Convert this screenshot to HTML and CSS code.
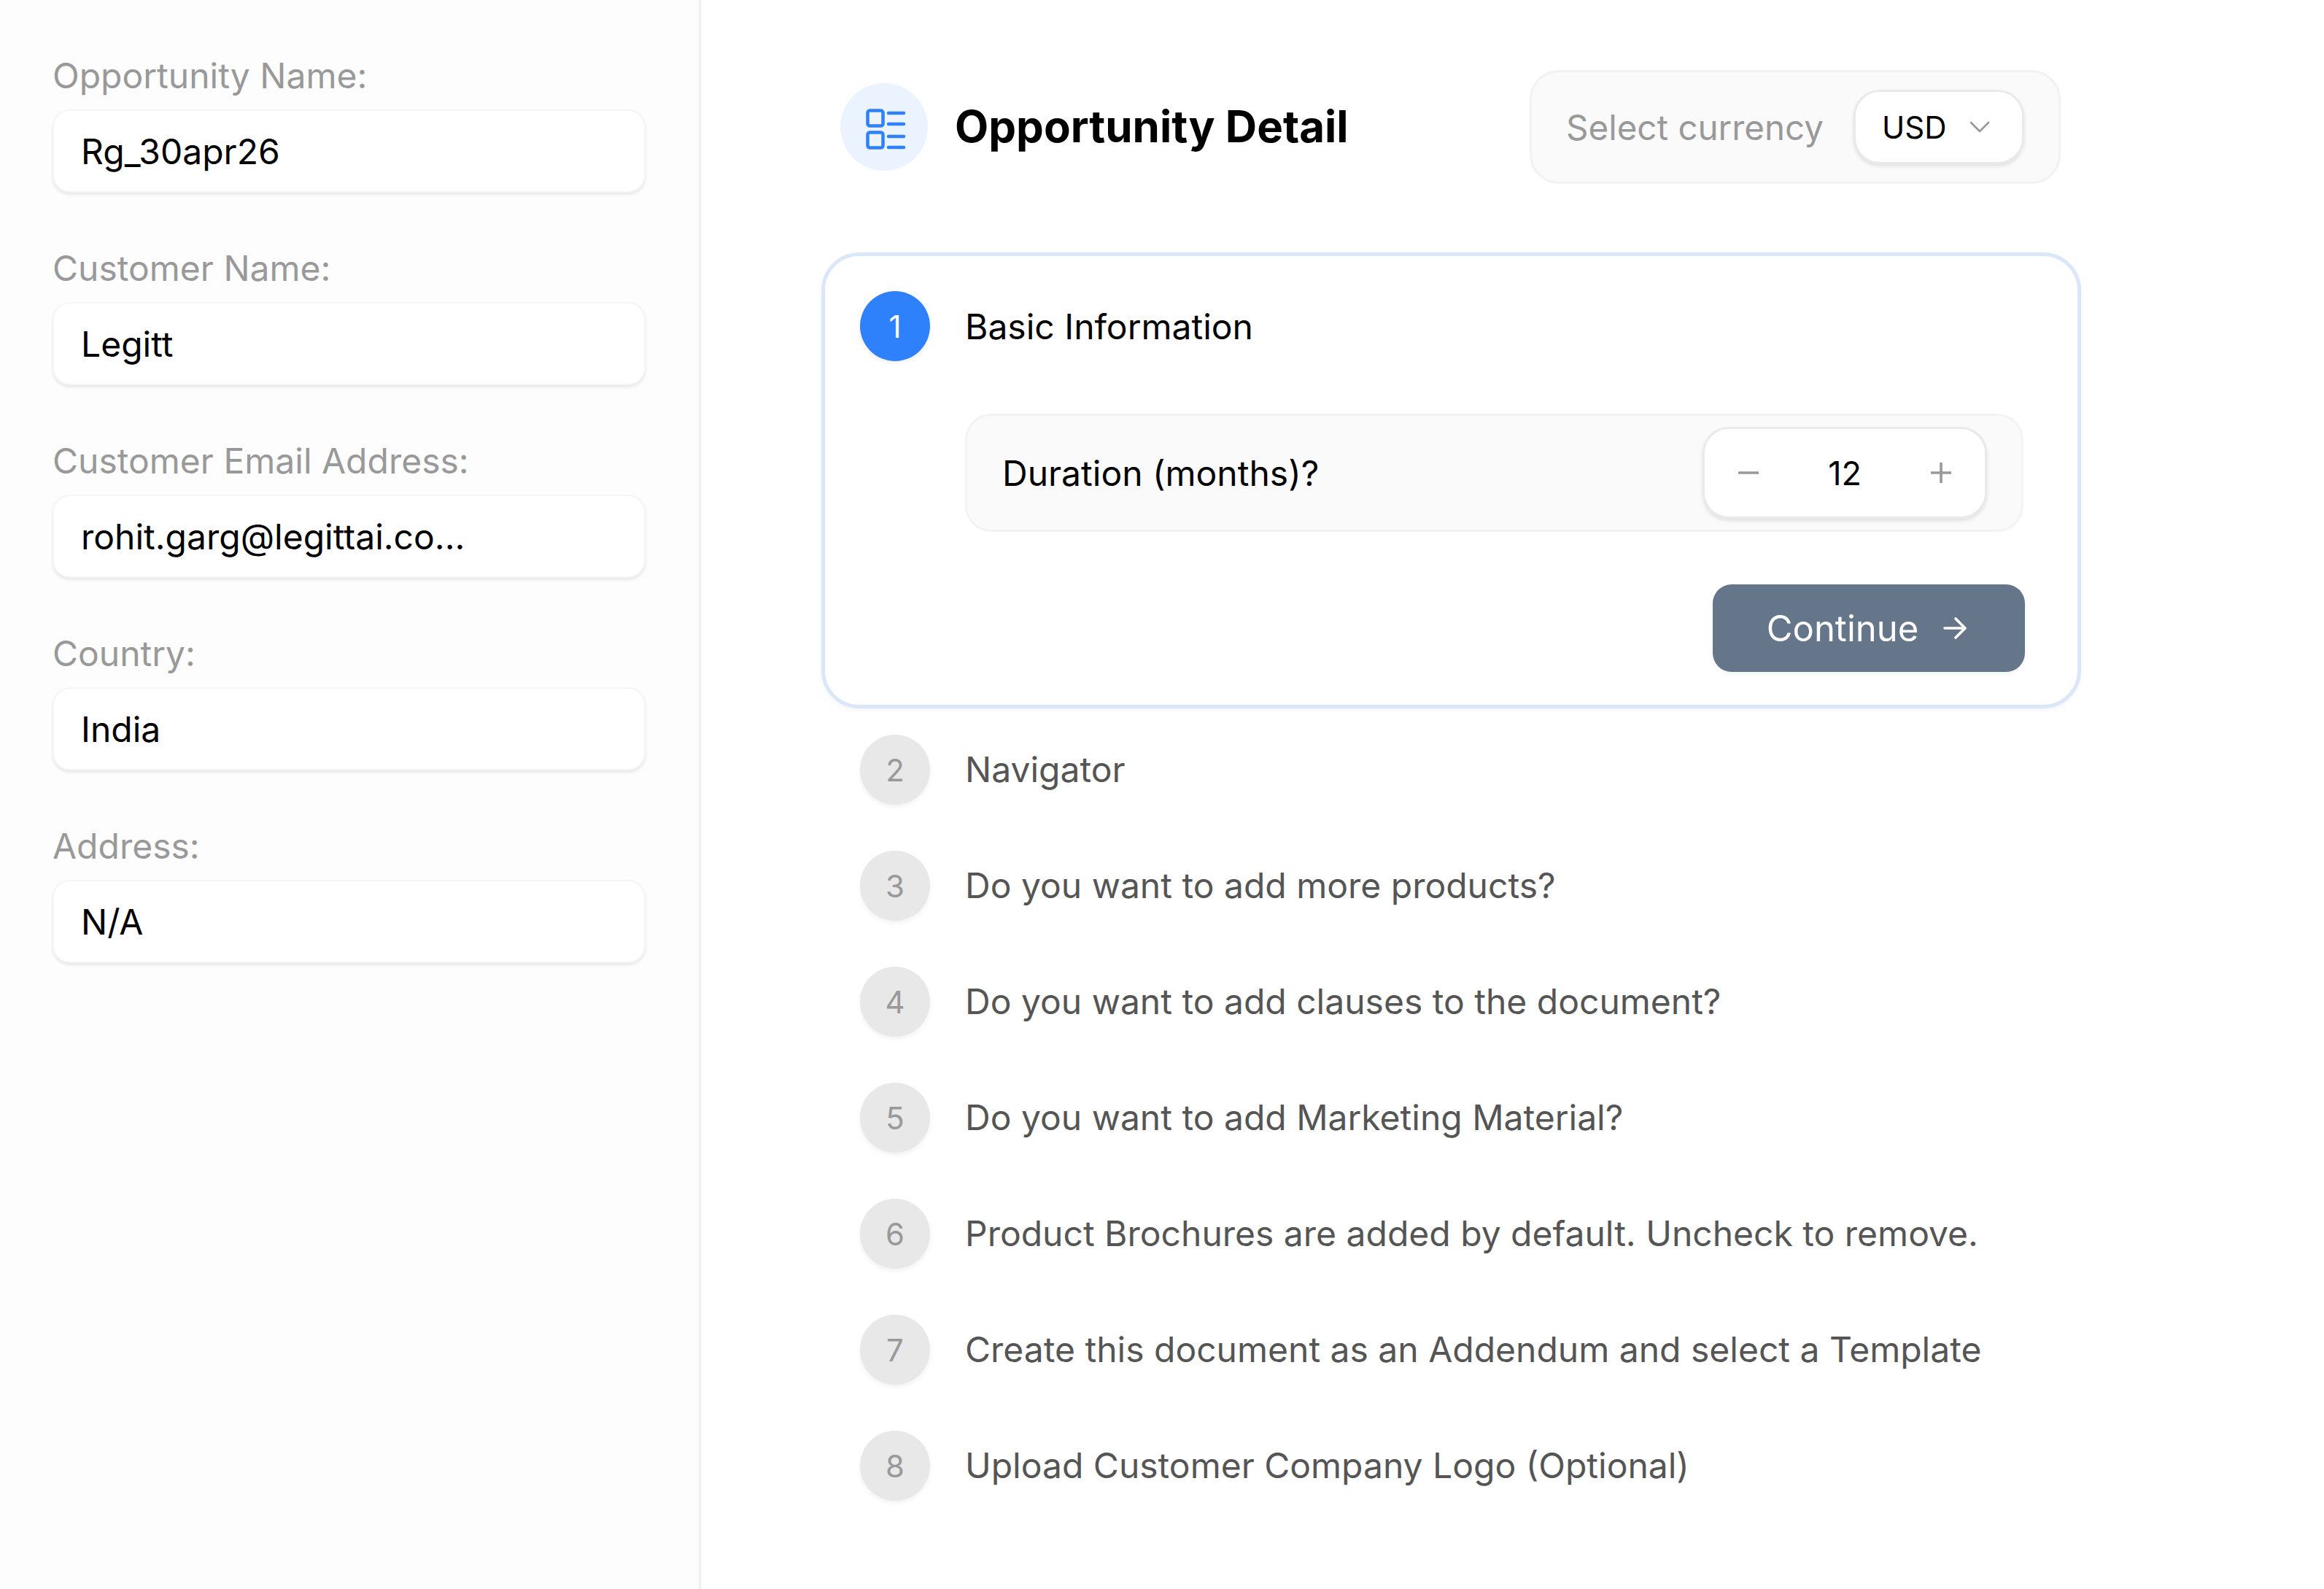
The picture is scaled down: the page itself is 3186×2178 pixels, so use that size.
FILE: index.html
```html
<!DOCTYPE html>
<html lang="en">
<head>
<meta charset="utf-8">
<title>Opportunity Detail</title>
<link rel="stylesheet" href="styles.css">
</head>
<body>
<div class="app">
  <aside class="sidebar">
    <div class="field"><div class="field-label">Opportunity Name:</div><div class="field-input">Rg_30apr26</div></div>
    <div class="field"><div class="field-label">Customer Name:</div><div class="field-input">Legitt</div></div>
    <div class="field"><div class="field-label">Customer Email Address:</div><div class="field-input">rohit.garg@legittai.co...</div></div>
    <div class="field"><div class="field-label">Country:</div><div class="field-input">India</div></div>
    <div class="field"><div class="field-label">Address:</div><div class="field-input">N/A</div></div>
  </aside>
  <main class="main">
    <header class="header">
      <div class="title-group">
        <div class="title-icon">
          <svg class="list-icon" viewBox="0 0 54 56" fill="none" stroke="#2f80fb" stroke-width="4.5" stroke-linecap="round" stroke-linejoin="round">
            <rect x="2.5" y="2.5" width="21" height="21" rx="3"/>
            <rect x="2.5" y="32.5" width="21" height="21" rx="3"/>
            <path d="M31 6h21M31 21h21M31 38h21M31 53h21"/>
          </svg>
        </div>
        <h1 class="title">Opportunity Detail</h1>
      </div>
      <div class="currency">
        <span class="currency-label">Select currency</span>
        <div class="currency-select">
          <span>USD</span>
          <svg class="chevron" viewBox="0 0 28 16" fill="none" stroke="#999" stroke-width="2.6" stroke-linecap="round" stroke-linejoin="round"><path d="M2 2l12 12L26 2"/></svg>
        </div>
      </div>
    </header>
    <section class="card">
      <div class="step">
        <div class="step-num step-num-active">1</div>
        <div class="step-text step-text-active">Basic Information</div>
      </div>
      <div class="duration">
        <span class="duration-label">Duration (months)?</span>
        <div class="stepper">
          <svg class="stepper-icon" viewBox="0 0 28 28" fill="none" stroke="#999" stroke-width="3.6" stroke-linecap="round"><path d="M1 14h26"/></svg>
          <span class="stepper-value">12</span>
          <svg class="stepper-icon" viewBox="0 0 28 28" fill="none" stroke="#999" stroke-width="3.6" stroke-linecap="round"><path d="M1 14h26M14 1v26"/></svg>
        </div>
      </div>
      <div class="card-actions">
        <div class="continue">
          <span>Continue</span>
          <svg class="arrow" viewBox="0 0 32 32" fill="none" stroke="#fff" stroke-width="3.6" stroke-linecap="round" stroke-linejoin="round"><path d="M2 16h28M17 3l13 13-13 13"/></svg>
        </div>
      </div>
    </section>
    <div class="steps">
      <div class="step"><div class="step-num">2</div><div class="step-text">Navigator</div></div>
      <div class="step"><div class="step-num">3</div><div class="step-text">Do you want to add more products?</div></div>
      <div class="step"><div class="step-num">4</div><div class="step-text">Do you want to add clauses to the document?</div></div>
      <div class="step"><div class="step-num">5</div><div class="step-text">Do you want to add Marketing Material?</div></div>
      <div class="step"><div class="step-num">6</div><div class="step-text">Product Brochures are added by default. Uncheck to remove.</div></div>
      <div class="step"><div class="step-num">7</div><div class="step-text">Create this document as an Addendum and select a Template</div></div>
      <div class="step"><div class="step-num">8</div><div class="step-text">Upload Customer Company Logo (Optional)</div></div>
    </div>
  </main>
</div>
</body>
</html>
```
FILE: styles.css
```css
* { box-sizing: border-box; }
html, body { margin: 0; height: 100%; background: #fff; }
body { font-family: Inter, "Liberation Sans", sans-serif; color: #000; overflow: hidden; }
.app { display: flex; height: 2178px; }

.sidebar {
  width: 961px; flex: none; background: #fdfdfd; border-right: 3px solid #f0f0f0;
  padding: 74px 0 0 72px; display: flex; flex-direction: column; gap: 74px;
}
.field { width: 813px; }
.field-label { font-size: 48px; line-height: 60px; color: #999; margin-bottom: 16px; }
.field-input {
  height: 114px; background: #fff; border: 2px solid #f5f5f5; border-radius: 24px;
  box-shadow: 0 3px 4px rgba(0,0,0,.09);
  padding-left: 37px; display: flex; align-items: center; font-size: 48px; color: #000;
}

.main { flex: none; width: 1730px; margin-left: 165px; }
.header {
  margin: 96px 0 94px; padding: 0 31px 0 26px; height: 156px;
  display: flex; justify-content: space-between; align-items: center;
}
.title-group { display: flex; align-items: center; gap: 37px; }
.title-icon {
  width: 120px; height: 120px; border-radius: 50%; background: #eaf3fe; padding: 6px 0 0 3px;
  display: flex; align-items: center; justify-content: center;
}
.list-icon { width: 54px; height: 56px; }
.title { margin: 0; padding-bottom: 2px; font-size: 60px; line-height: 76px; font-weight: 700; }
.currency {
  width: 728px; height: 156px; background: #fafafa; border: 3px solid #f2f2f2; border-radius: 40px;
  padding: 0 47px 0 47px; display: flex; align-items: center; justify-content: space-between;
}
.currency-label { font-size: 47.5px; color: #999; }
.currency-select {
  width: 234px; height: 102px; background: #fff; border: 3px solid #eaeaea; border-radius: 36px;
  box-shadow: 0 3px 5px rgba(0,0,0,.1);
  padding: 0 44px 0 36px; display: flex; align-items: center; justify-content: space-between; font-size: 42px;
}
.chevron { width: 28px; height: 16px; }

.card {
  width: 1727px; height: 625px; border: 5px solid #dae6fa; border-radius: 52px; background: #fff;
  padding: 48px 72px 45px 48px; box-shadow: 0 3px 6px rgba(0,0,0,.04);
}
.step { display: flex; align-items: center; gap: 48px; }
.step-num {
  width: 96px; height: 96px; flex: none; border-radius: 50%; background: #e8e8e8; color: #999;
  box-shadow: 0 3px 6px rgba(0,0,0,.06);
  display: flex; align-items: center; justify-content: center; font-size: 42px;
}
.step-num-active { background: #2f80fb; color: #fff; }
.step-text { font-size: 48px; line-height: 64px; color: #555; }
.step-text-active { color: #000; padding-top: 2px; }

.duration {
  margin: 72px 2px 72px 144px; height: 162px; background: #fafafa; border: 3px solid #f3f3f3; border-radius: 36px;
  padding: 0 47px 0 48px; display: flex; align-items: center; justify-content: space-between;
}
.duration-label { font-size: 48px; }
.stepper {
  width: 390px; height: 126px; background: #fff; border: 3px solid #eaeaea; border-radius: 36px;
  box-shadow: 0 3px 5px rgba(0,0,0,.1);
  padding: 0 46px; display: flex; align-items: center; justify-content: space-between;
}
.stepper-icon { width: 28px; height: 28px; }
.stepper-value { font-size: 45px; }

.card-actions { display: flex; justify-content: flex-end; }
.continue {
  width: 428px; height: 120px; background: #66768a; color: #fff; border-radius: 26px;
  box-shadow: 0 3px 6px rgba(0,0,0,.05); padding-right: 6px;
  display: flex; align-items: center; justify-content: center; gap: 34px; font-size: 49px;
}
.arrow { width: 32px; height: 32px; }

.steps { margin-top: 36px; padding-left: 53px; display: flex; flex-direction: column; gap: 63px; }
```
